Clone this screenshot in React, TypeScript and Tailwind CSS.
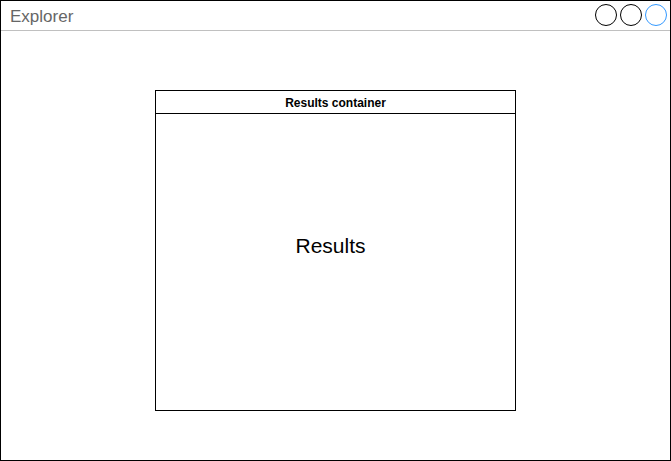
export default function App() {
  return (
    <div className="w-[671px] h-[461px] bg-white border border-black flex flex-col font-['Liberation_Sans',Arial,sans-serif]">
      {/* title bar */}
      <div className="h-[30px] shrink-0 border-b border-[#c0c0c0] flex items-center justify-between pl-[9px] pr-[3px]">
        <span className="text-[17px] text-[#666666] leading-none mt-[1px]">Explorer</span>
        <div className="flex items-center gap-[3px] -mt-[1px]">
          <div className="w-[22px] h-[22px] rounded-full border border-black" />
          <div className="w-[22px] h-[22px] rounded-full border border-black" />
          <div className="w-[22px] h-[22px] rounded-full border border-[#3399ff]" />
        </div>
      </div>

      {/* canvas */}
      <div className="flex-1 pt-[59px] pl-[154px]">
        <div className="w-[361px] h-[321px] border border-black flex flex-col">
          <div className="h-[23px] shrink-0 border-b border-black flex items-center justify-center text-[12px] font-bold text-black pt-[1px]">
            Results container
          </div>
          <div className="flex-1 flex items-center justify-center text-[21px] text-black pb-[33px] pr-[10px]">
            Results
          </div>
        </div>
      </div>
    </div>
  );
}
